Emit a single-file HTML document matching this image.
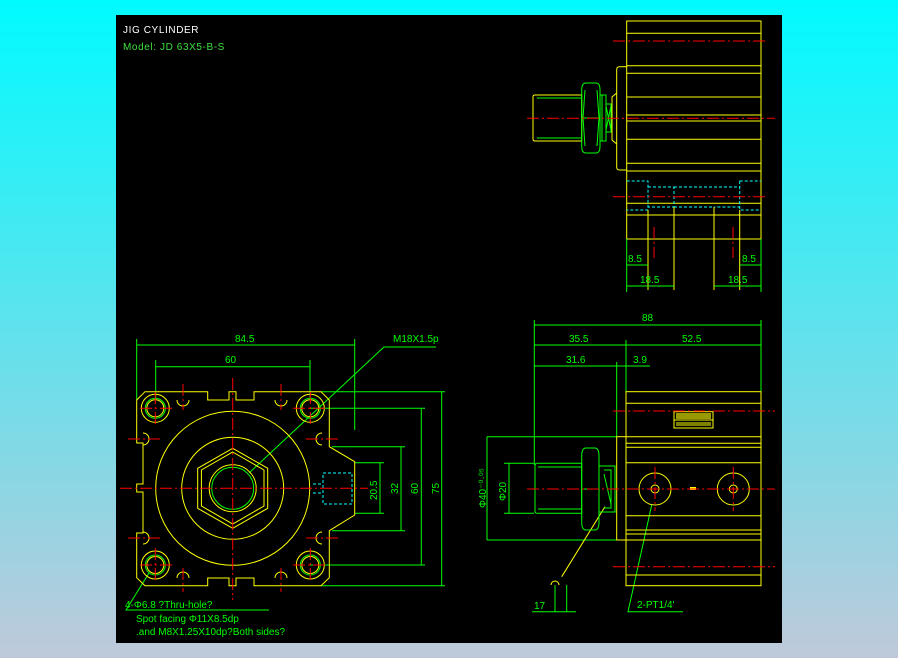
<!DOCTYPE html>
<html><head><meta charset="utf-8"><style>
html,body{margin:0;padding:0}
body{width:898px;height:658px;background:linear-gradient(#00fbff,#bfc9da);overflow:hidden}
svg{position:absolute;left:0;top:0}
text{font-family:"Liberation Sans",sans-serif;font-size:10px}
</style></head><body>
<svg width="898" height="658" viewBox="0 0 898 658">
<rect x="116" y="15" width="666" height="628" fill="#000"/>
<text x="123" y="33" fill="#fff" letter-spacing="0.6">JIG  CYLINDER</text>
<text x="123" y="50" fill="#3ce03c" letter-spacing="0.6">Model:  JD  63X5-B-S</text>

<g fill="none" stroke-width="1">
<!-- ===== TOP RIGHT VIEW ===== -->
<g stroke="#ff0" >
<rect x="626.7" y="21" width="134.3" height="218"/>
<path d="M626.7 33.3H761M626.7 65.7H761M626.7 73.3H761M626.7 97H761M626.7 115H761M626.7 121H761M626.7 139.3H761M626.7 163.3H761M626.7 171H761M626.7 203.3H761M626.7 215H761"/>
<path d="M626.7 66.7H619.5Q616.7 66.7 616.7 69.5V167Q616.7 170 619.5 170H626.7"/>
<path d="M616.7 93L612 97V140L616.7 144"/>
<path d="M535 95H581.7V141H535Q533 141 533 139V97Q533 95 535 95Z"/>
</g>
<g stroke="#0f0">
<path d="M537 98H581.7M537 138H581.7"/>
<path d="M586 83H596Q600 83 600 90V146Q600 153 596 153H586Q581.7 153 581.7 146V90Q581.7 83 586 83Z"/>
<path d="M581.7 118H600M585 90L583 118L585 146M597 90L599 118L597 146"/>
<path d="M600 95H606V141H600M602 95V141M606 104H611V132H606M606 106L611 130M611 106L606 130"/>
</g>
<g stroke="#0ff" stroke-dasharray="3 2">
<path d="M626.7 181H648V210H626.7M648 187H674V207H648M674 187H714M674 207H714M714 187H739.7V207H714M739.7 181H761M739.7 181V210H761"/>
</g>
<g stroke="#ff0"><path d="M648 210V290M674 207V290M714 207V290M739.7 210V290"/></g>
<g stroke="#f00" stroke-dasharray="12 3 2 3">
<path d="M613 41H767M527 118.3H775M613 196.7H767"/>
<path d="M654 227V258M733 227V258"/>
</g>
<g stroke="#0f0">
<path d="M626.7 239V292M761 239V292"/>
<path d="M626.7 265H648M739.7 265H761M626.7 286H674M714 286H761"/>
</g>
<g fill="#0f0" font-size="10">
<text x="628" y="262" fill="#0f0" stroke="none">8.5</text>
<text x="742" y="262" fill="#0f0" stroke="none">8.5</text>
<text x="640" y="283" fill="#0f0" stroke="none">18.5</text>
<text x="728" y="283" fill="#0f0" stroke="none">18.5</text>
</g>

<!-- ===== BOTTOM LEFT VIEW ===== -->
<g stroke="#0f0">
<path d="M136.7 339V400M354.7 339V430M136.7 345H354.7M155.7 360V400M310 360V400M155.7 366.7H310"/>
<path d="M321 391.7H445M310 408.3H425M332 446.7H405M354.7 462.7H384M354.7 513.3H384M332 530.7H405M310 565H425M321 585.7H445"/>
<path d="M380 462.7V513.3M401 446.7V530.7M421.3 408.3V565M441.7 391.7V585.7"/>
<path d="M436 347H384L249 473"/>
<path d="M149 573L126 610H269"/>
</g>
<g stroke="#ff0">
<path d="M145 391.7H207.7V400H229V391.7H236V400H254V391.7H321L329.3 400V446.7L354.7 461.7V515L329.3 530.7V577.7L321 585.7H254V578H236V585.7H229V578H207.7V585.7H145L136.7 577.7V533H143V492H136.7V484H143V443H136.7V400Z"/>
<circle cx="232.7" cy="488.3" r="77"/>
<circle cx="232.7" cy="488.3" r="51"/>
<path d="M232.7 448.3L267.7 468.3V508.3L232.7 528.3L197.7 508.3V468.3Z"/>
<path d="M232.7 452L264 470V506L232.7 524L201.4 506V470Z"/>
<circle cx="232.7" cy="488.3" r="23.5"/>
<circle cx="155.3" cy="408.3" r="14"/><circle cx="310.3" cy="408.3" r="14"/>
<circle cx="155.3" cy="565" r="14"/><circle cx="310.3" cy="565" r="14"/>
<circle cx="155.3" cy="408.3" r="8.5"/><circle cx="310.3" cy="408.3" r="8.5"/>
<circle cx="155.3" cy="565" r="8.5"/><circle cx="310.3" cy="565" r="8.5"/>
<path d="M177 400A6 6 0 0 0 189 400M275 400A6 6 0 0 0 287 400M177 578A6 6 0 0 1 189 578M275 578A6 6 0 0 1 287 578"/>
<path d="M143 433A6 6 0 0 1 143 445M143 532A6 6 0 0 1 143 544M322 433A6 6 0 0 0 322 445M322 532A6 6 0 0 0 322 544"/>
</g>
<g stroke="#0f0">
<circle cx="232.7" cy="488.3" r="21"/>
<circle cx="155.3" cy="408.3" r="10"/><circle cx="310.3" cy="408.3" r="10"/>
<circle cx="155.3" cy="565" r="10"/><circle cx="310.3" cy="565" r="10"/>
</g>
<g stroke="#0ff" stroke-dasharray="3 2"><path d="M323 473H352V504H323ZM313 484H323M313 493H323"/></g>
<g stroke="#f00" stroke-dasharray="12 3 2 3">
<path d="M120 488.3H368M232.7 378V600"/>
<path d="M140 408.3H172M293 408.3H326M155.3 392V425M310.3 392V425M140 565H172M293 565H326M155.3 548V582M310.3 548V582"/>
<path d="M183 384V410M281 384V410M183 568V592M281 568V592M128 439H160M128 538H160M306 439H338M306 538H338"/>
</g>
<g fill="#0f0" stroke="none">
<text x="235" y="342">84.5</text>
<text x="225" y="363">60</text>
<text x="393" y="342" font-size="9">M18X1.5p</text>
<text transform="translate(377,500) rotate(-90)">20.5</text>
<text transform="translate(398,494) rotate(-90)">32</text>
<text transform="translate(418,494) rotate(-90)">60</text>
<text transform="translate(439,494) rotate(-90)">75</text>
<text x="125" y="608" font-size="8.5">4-Φ6.8 ?Thru-hole?</text>
<text x="136" y="622" font-size="8.5">Spot facing Φ11X8.5dp</text>
<text x="136" y="635" font-size="8.5">.and M8X1.25X10dp?Both sides?</text>
</g>

<!-- ===== BOTTOM RIGHT VIEW ===== -->
<g stroke="#0f0">
<path d="M534.3 320V465M761 320V391.7M626 340V391.7M616.7 362V436.7"/>
<path d="M534.3 325H761M534.3 345H761M534.3 366H650"/>
<path d="M487 436.7H616.7M487 540H616.7M487 436.7V540M504 463.3H534M504 513.3H534M509 463.3V513.3"/>
<path d="M555 585V612M566.7 585V612M532 611.7H576"/>
<path d="M651.7 505L628 611.7H683"/>
</g>
<g stroke="#ff0">
<rect x="626" y="391.7" width="135" height="194"/>
<path d="M626 403.3H761M626 436.7H761M626 443.3H761M626 447.3H761M626 462.7H761M626 515.7H761M626 530H761M626 534H761M626 540H761M626 575H761"/>
<rect x="616.7" y="436.7" width="9.3" height="103.3"/>
<circle cx="655" cy="489" r="16"/><circle cx="733.3" cy="489" r="16"/>
<circle cx="655" cy="489" r="4"/><circle cx="733.3" cy="489" r="4"/>
<rect x="674" y="411.7" width="39" height="16.3"/>
<path d="M674 420H713M605 506.7L561.7 576.7"/>
<path d="M551 585A4 4 0 1 1 559 585"/>
</g>
<rect x="676" y="413" width="35" height="6" fill="#ff0" opacity="0.6"/>
<rect x="676" y="422" width="35" height="4" fill="#ff0" opacity="0.5"/>
<rect x="690" y="487" width="6" height="3" fill="#ff0"/>
<g stroke="#0f0">
<path d="M537 463.3H581.7V513.3H537Q535 513.3 535 511V466Q535 463.3 537 463.3Z"/>
<path d="M538 467H581.7M538 509H581.7"/>
<path d="M586 448H595Q599 448 599 456V522Q599 530 595 530H586Q581.7 530 581.7 522V456Q581.7 448 586 448Z"/>
<path d="M581.7 489H599M599 466H615V512H599M604 470H611V508H604M604 474L611 504"/>
</g>
<g stroke="#f00" stroke-dasharray="12 3 2 3">
<path d="M613 411H775M527 489H775M613 566.7H775M655 467V511M733.3 467V511"/>
</g>
<g fill="#0f0" stroke="none">
<text x="642" y="321">88</text>
<text x="569" y="342">35.5</text>
<text x="682" y="342">52.5</text>
<text x="566" y="363">31.6</text>
<text x="633" y="363">3.9</text>
<text transform="translate(486,508) rotate(-90)" font-size="9">Φ40⁻⁰·⁰⁵</text>
<text transform="translate(506,501) rotate(-90)">Φ20</text>
<text x="534" y="609">17</text>
<text x="637" y="608">2-PT1/4'</text>
</g>
</g>
</svg>
</body></html>
